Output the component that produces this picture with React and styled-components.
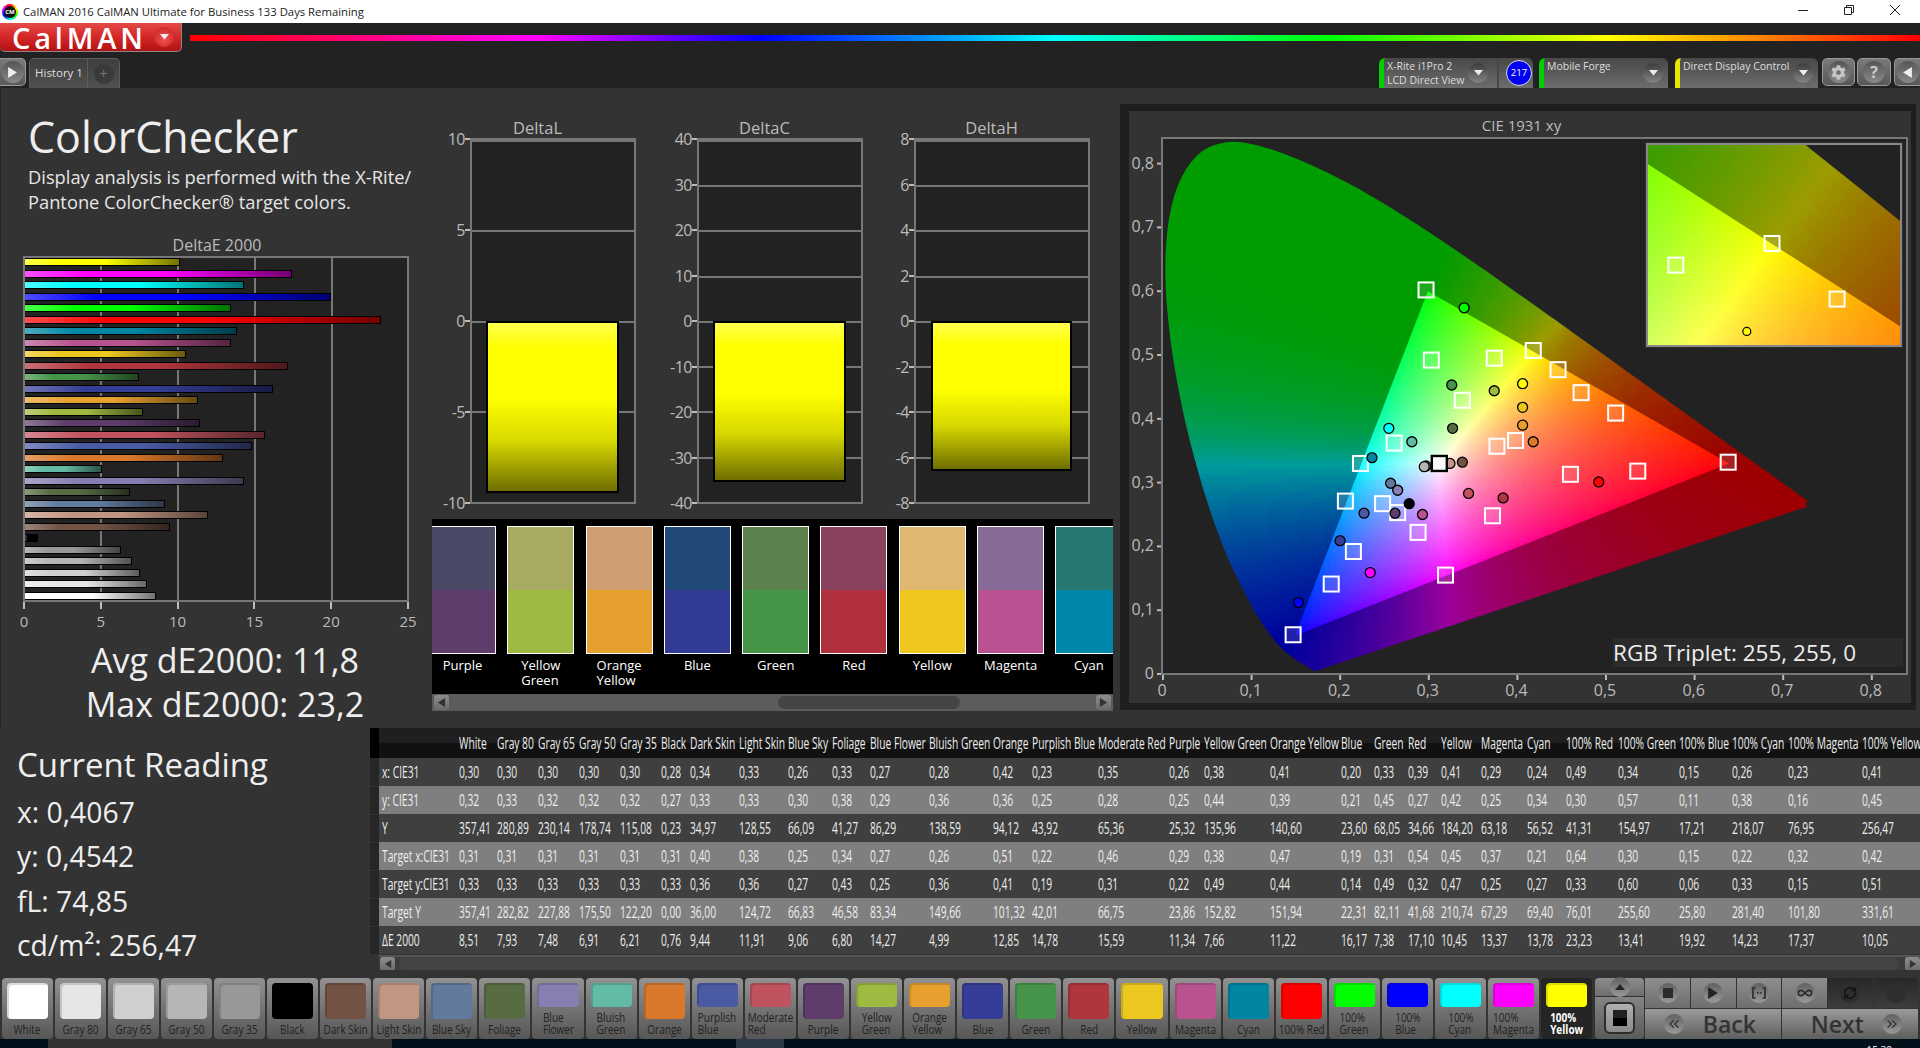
import React, { useMemo } from 'react';
import styled, { createGlobalStyle } from 'styled-components';
import { ChevronsLeft, ChevronsRight, Infinity as InfinityIcon, RefreshCw } from 'lucide-react';
import { FaCog } from 'react-icons/fa';

const Global = createGlobalStyle`
  html, body { margin: 0; padding: 0; background: #222; overflow: hidden; }
  body { font-family: "Open Sans", "Noto Sans", sans-serif; width: 1920px; height: 1048px; }
  * { box-sizing: border-box; }
`;

const PATCHES = [
  ['White', '#ffffff'], ['Gray 80', '#e6e6e6'], ['Gray 65', '#d0d0d0'], ['Gray 50', '#b6b6b6'], ['Gray 35', '#989898'],
  ['Black', '#000000'], ['Dark Skin', '#735244'], ['Light Skin', '#c29682'], ['Blue Sky', '#627a9d'], ['Foliage', '#576c43'],
  ['Blue Flower', '#8580b1'], ['Bluish Green', '#62bba5'], ['Orange', '#d9772a'], ['Purplish Blue', '#4a5aa5'], ['Moderate Red', '#c15360'],
  ['Purple', '#5e3c6c'], ['Yellow Green', '#9fba40'], ['Orange Yellow', '#e7a02e'], ['Blue', '#353d96'], ['Green', '#469449'],
  ['Red', '#af363c'], ['Yellow', '#ecc71f'], ['Magenta', '#b85390'], ['Cyan', '#0085a3'], ['100% Red', '#ff0000'],
  ['100% Green', '#00ff00'], ['100% Blue', '#0000ff'], ['100% Cyan', '#00ffff'], ['100% Magenta', '#ff00ff'], ['100% Yellow', '#ffff00'],
];

const ROWS = [
  ['x: CIE31', '0,30 0,30 0,30 0,30 0,30 0,28 0,34 0,33 0,26 0,33 0,27 0,28 0,42 0,23 0,35 0,26 0,38 0,41 0,20 0,33 0,39 0,41 0,29 0,24 0,49 0,34 0,15 0,26 0,23 0,41'],
  ['y: CIE31', '0,32 0,33 0,32 0,32 0,32 0,27 0,33 0,33 0,30 0,38 0,29 0,36 0,36 0,25 0,28 0,25 0,44 0,39 0,21 0,45 0,27 0,42 0,25 0,34 0,30 0,57 0,11 0,38 0,16 0,45'],
  ['Y', '357,41 280,89 230,14 178,74 115,08 0,23 34,97 128,55 66,09 41,27 86,29 138,59 94,12 43,92 65,36 25,32 135,96 140,60 23,60 68,05 34,66 184,20 63,18 56,52 41,31 154,97 17,21 218,07 76,95 256,47'],
  ['Target x:CIE31', '0,31 0,31 0,31 0,31 0,31 0,31 0,40 0,38 0,25 0,34 0,27 0,26 0,51 0,22 0,46 0,29 0,38 0,47 0,19 0,31 0,54 0,45 0,37 0,21 0,64 0,30 0,15 0,22 0,32 0,42'],
  ['Target y:CIE31', '0,33 0,33 0,33 0,33 0,33 0,33 0,36 0,36 0,27 0,43 0,25 0,36 0,41 0,19 0,31 0,22 0,49 0,44 0,14 0,49 0,32 0,47 0,25 0,27 0,33 0,60 0,06 0,33 0,15 0,51'],
  ['Target Y', '357,41 282,82 227,88 175,50 122,20 0,00 36,00 124,72 66,83 46,58 83,34 149,66 101,32 42,01 66,75 23,86 152,82 151,94 22,31 82,11 41,68 210,74 67,29 69,40 76,01 255,60 25,80 281,40 101,80 331,61'],
  ['ΔE 2000', '8,51 7,93 7,48 6,91 6,21 0,76 9,44 11,91 9,06 6,80 14,27 4,99 12,85 14,78 15,59 11,34 7,66 11,22 16,17 7,38 17,10 10,45 13,37 13,78 23,23 13,41 19,92 14,23 17,37 10,05'],
].map(([label, values]) => [label, values.split(' ')]);

const COL_STARTS = [458.5, 497, 538, 579, 620, 660.5, 690, 739, 787.5, 832, 869.5, 929, 993, 1032, 1098, 1169, 1204, 1270, 1341, 1374, 1408, 1441, 1481, 1527, 1566, 1618, 1679, 1732, 1788, 1862, 1920];

const DE_VALUES = ROWS[6][1].map((v) => parseFloat(v.replace(',', '.')));

const shade = (hex, k, toward) => {
  const n = parseInt(hex.slice(1), 16);
  const c = [n >> 16, (n >> 8) & 255, n & 255].map((v) => Math.round(v + (toward - v) * k));
  return `rgb(${c[0]},${c[1]},${c[2]})`;
};

/* ---------- window chrome ---------- */
const Page = styled.div`
  width: 1920px;
  height: 1048px;
  display: flex;
  flex-direction: column;
  overflow: hidden;
  background: #333;
`;
const TitleBar = styled.div`
  height: 23px;
  flex: none;
  background: #fff;
  display: flex;
  align-items: center;
  padding-left: 2px;
  color: #222;
`;
const AppBadge = styled.div`
  width: 16px;
  height: 16px;
  border-radius: 50%;
  background: conic-gradient(#f00, #ff0, #0f0, #0ff, #00f, #f0f, #f00);
  display: flex;
  align-items: center;
  justify-content: center;
  flex: none;
`;
const AppBadgeCore = styled.span`
  width: 12px;
  height: 12px;
  border-radius: 50%;
  background: #111;
  color: #fff;
  font-size: 6px;
  font-weight: 700;
  line-height: 12px;
  text-align: center;
`;
const WindowTitle = styled.span`
  margin-left: 5px;
  font-size: 11.3px;
  white-space: nowrap;
`;
const WindowButtons = styled.div`
  margin-left: auto;
  display: flex;
  padding-right: 2px;
  height: 100%;
`;
const WindowButton = styled.div`
  width: 46px;
  display: flex;
  align-items: center;
  justify-content: center;
  padding-bottom: 3px;
`;
const TopBar = styled.div`
  height: 65px;
  flex: none;
  background: #222;
`;
const LogoRow = styled.div`
  height: 35px;
  display: flex;
  align-items: flex-start;
`;
const Logo = styled.div`
  width: 182px;
  height: 29px;
  flex: none;
  background: linear-gradient(#e54a4a, #d62a2a 45%, #b31212);
  border-radius: 0 0 5px 5px;
  border-right: 1px solid #8a8a8a;
  border-bottom: 1px solid #8a8a8a;
  display: flex;
  align-items: center;
  padding-left: 12px;
  color: #fff;
  font-size: 29px;
  font-weight: 600;
  letter-spacing: 3.8px;
  line-height: 29px;
`;
const LogoArrow = styled.span`
  margin-left: auto;
  margin-right: 7px;
  width: 20px;
  height: 20px;
  border-radius: 50%;
  background: radial-gradient(circle at 50% 60%, #f05050, #c02020);
  display: flex;
  align-items: center;
  justify-content: center;
`;
const Rainbow = styled.div`
  flex: 1;
  height: 6px;
  margin: 12px 0 0 8px;
  background: linear-gradient(90deg, #f00 0%, #f0f 20%, #00f 33%, #0ff 50%, #0f0 66%, #ff0 82%, #f00 100%);
`;
const TabRow = styled.div`
  height: 30px;
  display: flex;
  align-items: flex-start;
  overflow: hidden;
`;
const PlayTab = styled.div`
  width: 26px;
  height: 28px;
  flex: none;
  border: 1px solid #999;
  border-left: 0;
  border-radius: 0 5px 5px 0;
  background: linear-gradient(#7a7a7a, #5a5a5a);
  display: flex;
  align-items: center;
  justify-content: center;
`;
const HistoryTab = styled.div`
  width: 59px;
  height: 30px;
  margin-left: 3px;
  flex: none;
  border-radius: 5px 0 0 0;
  background: linear-gradient(#3e3e3e, #505050);
  border: 1px solid #5c5c5c;
  border-bottom: 0;
  color: #ddd;
  font-size: 11.5px;
  line-height: 28px;
  padding-left: 5px;
  white-space: nowrap;
`;
const PlusTab = styled.div`
  width: 32px;
  height: 30px;
  flex: none;
  border-radius: 0 5px 0 0;
  background: linear-gradient(#3e3e3e, #505050);
  border: 1px solid #5c5c5c;
  border-left: 0;
  border-bottom: 0;
  display: flex;
  align-items: center;
  justify-content: center;
`;
const PlusCircle = styled.span`
  width: 20px;
  height: 20px;
  border-radius: 50%;
  background: #3a3a3a;
  color: #777;
  font-size: 14px;
  line-height: 20px;
  text-align: center;
`;
const Spacer = styled.div`
  flex: 1;
`;
const DeviceTab = styled.div`
  width: ${(p) => p.$w}px;
  margin-left: ${(p) => p.$ml}px;
  height: 30px;
  flex: none;
  border-radius: 6px 6px 0 0;
  background: linear-gradient(#484848, #6c6c6c);
  border-left: 5px solid ${(p) => p.$bar};
  display: flex;
  align-items: flex-start;
  overflow: hidden;
`;
const DeviceText = styled.div`
  padding: 1px 0 0 3px;
  color: #ddd;
  font-size: 10.5px;
  line-height: 14px;
  white-space: nowrap;
  width: ${(p) => p.$w}px;
  flex: none;
`;
const DropCircle = styled.span`
  width: 20px;
  height: 20px;
  margin-top: 5px;
  flex: none;
  border-radius: 50%;
  background: linear-gradient(#3c3c3c, #848484);
  display: flex;
  align-items: center;
  justify-content: center;
`;
const TabDivider = styled.span`
  width: 2px;
  height: 30px;
  margin-left: 9px;
  background: #484848;
  flex: none;
`;
const CountBadge = styled.span`
  width: 26px;
  height: 26px;
  margin: 2px 0 0 7px;
  flex: none;
  border-radius: 50%;
  background: #0000f0;
  border: 1px solid #ddd;
  color: #fff;
  font-size: 9.5px;
  line-height: 24px;
  text-align: center;
`;
const ToolButton = styled.div`
  width: ${(p) => p.$w}px;
  margin-left: ${(p) => p.$ml}px;
  height: 28px;
  flex: none;
  border: 1px solid #999;
  border-radius: ${(p) => (p.$open ? '5px 0 0 5px' : '5px')};
  ${(p) => (p.$open ? 'border-right: 0;' : '')}
  background: linear-gradient(#7a7a7a, #585858);
  display: flex;
  align-items: center;
  justify-content: center;
`;
const ToolCircle = styled.span`
  width: 22px;
  height: 22px;
  border-radius: 50%;
  background: linear-gradient(#555, #8a8a8a);
  color: #ccc;
  font-size: 16px;
  font-weight: 700;
  line-height: 22px;
  text-align: center;
  display: flex;
  align-items: center;
  justify-content: center;
`;

/* ---------- main area ---------- */
const Main = styled.div`
  height: 882px;
  flex: none;
  display: flex;
  flex-direction: column;
  background: #333;
`;
const UpperRow = styled.div`
  height: 640px;
  flex: none;
  display: flex;
`;
const LeftPane = styled.div`
  width: 432px;
  flex: none;
  border-left: 1px solid #262626;
  padding-left: 27px;
`;
const Heading = styled.h1`
  margin: 24px 0 0;
  font-size: 43px;
  font-weight: 400;
  line-height: 50px;
  height: 50px;
  color: #eee;
  white-space: nowrap;
`;
const Description = styled.p`
  margin: 2px 0 0;
  color: #e6e6e6;
  font-size: 18.3px;
  line-height: 25px;
  white-space: nowrap;
`;
const ChartTitle = styled.div`
  height: 20px;
  font-size: 16px;
  line-height: 20px;
  color: #bbb;
  text-align: center;
  white-space: nowrap;
`;
const DeTitle = styled(ChartTitle)`
  margin: 21px 0 0 -27px;
  width: 432px;
`;
const DePlot = styled.div`
  margin: 1px 0 0 -5.5px;
  width: 386px;
  height: 346px;
  border: 2px solid #777;
  background-color: #222;
  background-image: repeating-linear-gradient(90deg, transparent 0 75px, #777 75px 77px);
  display: flex;
  flex-direction: column;
  justify-content: space-between;
  align-items: flex-start;
`;
const DeBar = styled.div`
  height: 8px;
  border: 1.5px solid #000;
  border-left: 0;
  flex: none;
`;
const DeAxis = styled.div`
  margin-left: -4.5px;
  width: 385px;
  display: flex;
  justify-content: space-between;
`;
const DeTick = styled.div`
  width: 1px;
  display: flex;
  flex-direction: column;
  align-items: center;
  color: #bbb;
  font-size: 15px;
  line-height: 20px;
  &::before {
    content: '';
    width: 2px;
    height: 7px;
    background: #bbb;
    flex: none;
    margin-bottom: 2px;
  }
`;
const SummaryBlock = styled.div`
  margin: 7px 0 0 -11px;
  width: 416px;
  text-align: center;
  color: #eee;
  font-size: 34px;
  line-height: 44px;
  white-space: nowrap;
`;
const MiddlePane = styled.div`
  width: 681px;
  flex: none;
`;
const DeltaRow = styled.div`
  display: flex;
  padding-top: 30px;
`;
const DeltaChart = styled.div`
  margin-left: ${(p) => p.$ml}px;
  flex: none;
`;
const DeltaTitle = styled(ChartTitle)`
  font-size: 16.5px;
  padding-left: ${(p) => p.$shift}px;
`;
const DeltaBody = styled.div`
  display: flex;
`;
const DeltaLabels = styled.div`
  width: 38px;
  height: 366px;
  display: flex;
  flex-direction: column;
  justify-content: space-between;
  padding: 1px 0;
`;
const DeltaLabel = styled.div`
  height: 0;
  display: flex;
  align-items: center;
  justify-content: flex-end;
  color: #bbb;
  font-size: 16px;
  letter-spacing: -0.5px;
  &::after {
    content: '';
    width: 5px;
    height: 2px;
    margin-left: 0;
    background: #bbb;
  }
`;
const DeltaPlot = styled.div`
  position: relative;
  width: ${(p) => p.$w}px;
  height: 366px;
  border: 2px solid #777;
  background-color: #222;
  background-image: repeating-linear-gradient(180deg, #777 0 2px, transparent 2px calc(100% / ${(p) => p.$n}));
`;
const DeltaBar = styled.div`
  position: absolute;
  left: ${(p) => p.$left}px;
  top: 181px;
  width: ${(p) => p.$w}px;
  height: ${(p) => p.$h}px;
  border: 2px solid #000;
  background: linear-gradient(#ffff50 0%, #ffff00 15%, #ffff00 45%, #d8d800 70%, #6e6e00 100%);
`;
const SwatchStrip = styled.div`
  margin-top: 15px;
  height: 175px;
  background: #000;
  overflow: hidden;
  display: flex;
  padding-top: 7px;
`;
const SwatchRow = styled.div`
  display: flex;
  gap: 11.3px;
  margin-left: -3px;
  flex: none;
`;
const SwatchItem = styled.div`
  width: 67px;
  flex: none;
`;
const SwatchFrame = styled.div`
  height: 128px;
  border: 1px solid #fff;
  display: flex;
  flex-direction: column;
`;
const SwatchHalf = styled.div`
  flex: 1;
  background: ${(p) => p.$c};
`;
const SwatchCaption = styled.div`
  margin-top: 4px;
  display: flex;
  justify-content: center;
  color: #fff;
  font-size: 13px;
  line-height: 14.5px;
  white-space: nowrap;
`;
const ScrollTrack = styled.div`
  height: ${(p) => p.$h}px;
  background: ${(p) => p.$bg};
  display: flex;
  align-items: center;
  padding: 0 2px;
`;
const ScrollButton = styled.div`
  width: 15px;
  height: ${(p) => p.$h}px;
  background: linear-gradient(#8d8d8d, #6a6a6a);
  border-radius: 3px;
  flex: none;
  display: flex;
  align-items: center;
  justify-content: center;
`;
const StripThumb = styled.div`
  width: 182px;
  height: 13px;
  margin: 0 auto 0 329px;
  background: #444;
  border-radius: 7px;
`;

/* ---------- CIE ---------- */
const CiePanel = styled.div`
  margin: 16px 0 0 7px;
  width: 796px;
  height: 606px;
  flex: none;
  background: #333;
  border: solid #1e1e1e;
  border-width: 7px 5px 7px 9px;
  padding-top: 4px;
`;
const CieTitle = styled(ChartTitle)`
  height: 21px;
  font-size: 15px;
  padding-left: 3px;
`;
const CieCanvas = styled.div`
  position: relative;
  width: 782px;
  height: 565px;
`;
const InsetFrame = styled.div`
  position: absolute;
  left: 516px;
  top: 6px;
  width: 258px;
  height: 206px;
  border: 3px solid #2e2e2e;
`;
const InsetSvg = styled.svg`
  display: block;
  width: 252px;
  height: 200px;
  border: 2px solid #888;
  box-sizing: content-box;
  margin: -2px;
`;
const TripletBox = styled.div`
  position: absolute;
  left: 484px;
  top: 502px;
  width: 290px;
  height: 29px;
  background: #2b2b2b;
  color: #eee;
  font-size: 22.5px;
  line-height: 29px;
  white-space: nowrap;
`;

/* ---------- lower ---------- */
const LowerRow = styled.div`
  height: 242px;
  flex: none;
  display: flex;
`;
const ReadingPane = styled.div`
  width: 370px;
  flex: none;
  padding: 15px 0 0 17px;
  color: #eee;
  white-space: nowrap;
`;
const ReadingTitle = styled.div`
  font-size: 33px;
  line-height: 44px;
  margin-bottom: 3px;
`;
const ReadingLine = styled.div`
  font-size: 28.3px;
  line-height: 44.3px;
`;
const TablePane = styled.div`
  width: 1550px;
  flex: none;
`;
const DataTable = styled.table`
  border-collapse: collapse;
  table-layout: fixed;
  width: 1550px;
`;
const Col = styled.col`
  width: ${(p) => p.$w}px;
`;
const Tr = styled.tr`
  height: ${(p) => p.$h}px;
  background: ${(p) => p.$bg};
`;
const Th = styled.th`
  padding: 0;
  height: 30px;
  font-weight: 400;
  text-align: left;
  background: linear-gradient(#1f1f1f 50%, #111 50%);
  overflow: visible;
`;
const Td = styled.td`
  padding: 0;
  height: 28px;
  overflow: visible;
`;
const Gutter = styled.td`
  padding: 0;
  background: ${(p) => p.$bg};
  border-bottom: 1px solid #333;
`;
const HeaderGutter = styled.th`
  padding: 0;
  background: #000;
`;
const CellText = styled.span`
  display: inline-block;
  color: #eee;
  font-size: 16px;
  line-height: 20px;
  white-space: nowrap;
  transform: scaleX(0.64);
  transform-origin: left center;
`;
const RowLabel = styled(CellText)`
  margin-left: 3px;
`;
const TableScroll = styled(ScrollTrack)`
  margin-left: 9px;
  padding: 0 0 0 1px;
  border-top: 2px solid #555;
  border-bottom: 1px solid #555;
`;
const TableThumb = styled.div`
  flex: 1;
  height: 14px;
  margin: 0 6px 0 4px;
  background: #444;
  border-radius: 6px;
`;

/* ---------- palette ---------- */
const BottomRow = styled.div`
  height: 69px;
  flex: none;
  background: #333;
  padding: 8px 0 0 1.5px;
  display: flex;
`;
const PatchButton = styled.div`
  width: 51.1px;
  height: 61px;
  margin-right: 2px;
  flex: none;
  border-radius: 4px;
  background: ${(p) => (p.$on ? '#252525' : 'linear-gradient(#929292, #565656)')};
  padding: 5px 5px 0;
  color: ${(p) => (p.$on ? '#fff' : '#222')};
  font-weight: ${(p) => (p.$on ? 700 : 400)};
`;
const PatchChip = styled.div`
  height: ${(p) => p.$h}px;
  border-radius: 4px;
  background: ${(p) => p.$c};
  box-shadow: inset 2px 2px 0 rgba(0, 0, 0, 0.14);
`;
const PatchLabel = styled.div`
  margin-top: 5px;
  display: flex;
  justify-content: center;
  font-size: 12.5px;
  line-height: 12px;
  white-space: nowrap;
`;
const PatchText = styled.span`
  display: inline-block;
  text-align: left;
  transform: scaleX(0.8);
`;
const Controls = styled.div`
  width: 323px;
  margin-left: 1px;
  flex: none;
  height: 61px;
  display: flex;
`;
const ControlSide = styled.div`
  width: 49px;
  flex: none;
  display: flex;
  flex-direction: column;
`;
const SideUp = styled.div`
  height: 18px;
  border-radius: 4px 4px 0 0;
  background: linear-gradient(#8c8c8c, #6e6e6e);
  display: flex;
  align-items: center;
  justify-content: center;
`;
const SideStop = styled.div`
  flex: 1;
  margin-top: 1px;
  border-radius: 0 0 4px 4px;
  background: linear-gradient(#848484, #5a5a5a);
  display: flex;
  align-items: center;
  justify-content: center;
`;
const StopFrame = styled.div`
  width: 31px;
  height: 32px;
  border: 2px solid #2e2e2e;
  border-radius: 6px;
  background: linear-gradient(#b0b0b0, #8a8a8a);
  display: flex;
  align-items: center;
  justify-content: center;
`;
const StopCore = styled.div`
  width: 14px;
  height: 16px;
  background: linear-gradient(#222 50%, #000 50%);
`;
const ControlMain = styled.div`
  flex: 1;
  display: flex;
  flex-direction: column;
  gap: 1px;
  margin-left: 1px;
`;
const ControlTop = styled.div`
  height: 30px;
  display: grid;
  grid-template-columns: repeat(6, 1fr);
  gap: 1px;
`;
const ControlCell = styled.div`
  background: ${(p) => (p.$dark ? 'linear-gradient(#282828, #3c3c3c)' : 'linear-gradient(#8e8e8e, #6e6e6e)')};
  display: flex;
  align-items: center;
  justify-content: center;
`;
const Knob = styled.span`
  width: 20px;
  height: 20px;
  border-radius: 50%;
  background: ${(p) => (p.$dark ? '#2e2e2e' : 'linear-gradient(#606060, #9a9a9a)')};
  display: flex;
  align-items: center;
  justify-content: center;
  flex: none;
`;
const ControlBottom = styled.div`
  flex: 1;
  display: grid;
  grid-template-columns: 1fr 1fr;
  gap: 1px;
`;
const NavButton = styled.div`
  background: linear-gradient(#9a9a9a, #5e5e5e);
  display: flex;
  align-items: center;
  justify-content: ${(p) => p.$justify};
  gap: 18.5px;
  padding: 0 16px 0 19px;
  color: #333;
  font-size: 23px;
  font-weight: 600;
  line-height: 30px;
`;
const Taskbar = styled.div`
  height: 9px;
  flex: none;
  background: #00101a;
  display: flex;
  overflow: hidden;
`;
const TaskSegment = styled.div`
  width: ${(p) => p.$w}px;
  background: ${(p) => p.$c};
  flex: none;
`;
const Clock = styled.div`
  margin-left: auto;
  margin-right: 28px;
  padding-top: 5px;
  color: #fff;
  font-size: 10px;
  line-height: 12px;
`;

/* ---------- gamut computation ---------- */
const RAW_LOCUS = [[.1741,.005],[.1738,.0049],[.1733,.0048],[.1726,.0048],[.1714,.0051],[.1703,.0058],[.1689,.0069],[.1669,.0086],[.1644,.0109],[.1611,.0138],[.1566,.0177],[.151,.0227],[.144,.0297],[.1355,.0399],[.1241,.0578],[.1096,.0868],[.0913,.1327],[.0687,.2007],[.0454,.295],[.0235,.4127],[.0082,.5384],[.0039,.6548],[.0139,.7502],[.0389,.812],[.0743,.8338],[.1142,.8262],[.1547,.8059],[.1929,.7816],[.2296,.7543],[.2658,.7243],[.3016,.6923],[.3373,.6589],[.3731,.6245],[.4087,.5896],[.4441,.5547],[.4788,.5202],[.5125,.4866],[.5448,.4544],[.5752,.4242],[.6029,.3965],[.627,.3725],[.6482,.3514],[.6658,.334],[.6801,.3197],[.6915,.3083],[.7006,.2993],[.7079,.292],[.714,.2859],[.719,.2809],[.726,.274],[.7347,.2653]];
const smoothCurve = (pts, steps) => {
  const out = [];
  for (let i = 0; i < pts.length - 1; i++) {
    const p0 = pts[Math.max(i - 1, 0)];
    const p1 = pts[i];
    const p2 = pts[i + 1];
    const p3 = pts[Math.min(i + 2, pts.length - 1)];
    for (let s = 0; s < steps; s++) {
      const t = s / steps;
      const c = (a, b, cc, d) => 0.5 * (2 * b + (cc - a) * t + (2 * a - 5 * b + 4 * cc - d) * t * t + (3 * b - a - 3 * cc + d) * t * t * t);
      out.push([c(p0[0], p1[0], p2[0], p3[0]), c(p0[1], p1[1], p2[1], p3[1])]);
    }
  }
  out.push(pts[pts.length - 1]);
  return out;
};
const LOCUS = smoothCurve(RAW_LOCUS, 5);
const TRI = [[.64,.33],[.3,.6],[.15,.06]];

const linearRatios = (x, y) => {
  const yy = Math.max(y, 0.002);
  const X = x / yy;
  const Z = (1 - x - y) / yy;
  const r = Math.max(0, 3.2406 * X - 1.5372 - 0.4986 * Z);
  const g = Math.max(0, -0.9689 * X + 1.8758 + 0.0415 * Z);
  const b = Math.max(0, 0.0557 * X - 0.204 + 1.057 * Z);
  const m = Math.max(r, g, b, 1e-6);
  return [r / m, g / m, b / m];
};
const q = (v, s) => Math.min(255, Math.round(v / s) * s);
const innerColor = (x, y) => {
  const [r, g, b] = linearRatios(x, y);
  const t = (v) => q(255 * Math.pow(v, 1 / 1.35), 4);
  return `rgb(${t(r)},${t(g)},${t(b)})`;
};
const outerColor = (x, y) => {
  const [r, g, b] = linearRatios(x, y);
  const bb = g >= r && g >= b ? b * b : b;
  const k = 156;
  return `rgb(${q(r * k, 4)},${q(g * k, 4)},${q(bb * k, 4)})`;
};
const triSide = (x, y, a, b) => (b[0] - a[0]) * (y - a[1]) - (b[1] - a[1]) * (x - a[0]);
const inTriangle = (x, y, margin) => {
  const s1 = triSide(x, y, TRI[0], TRI[1]);
  const s2 = triSide(x, y, TRI[1], TRI[2]);
  const s3 = triSide(x, y, TRI[2], TRI[0]);
  return s1 >= margin && s2 >= margin && s3 >= margin;
};
const inLocus = (x, y) => {
  let c = false;
  for (let i = 0, j = RAW_LOCUS.length - 1; i < RAW_LOCUS.length; j = i++) {
    const a = RAW_LOCUS[i];
    const b = RAW_LOCUS[j];
    if (a[1] > y !== b[1] > y && x < ((b[0] - a[0]) * (y - a[1])) / (b[1] - a[1]) + a[0]) c = !c;
  }
  return c;
};
const gridPaths = (w, h, cell, toX, toY, colorFor, keep) => {
  const groups = new Map();
  for (let py = 0; py < h; py += cell) {
    for (let px = 0; px < w; px += cell) {
      const x = toX(px + cell / 2);
      const y = toY(py + cell / 2);
      if (!keep(px, py, x, y)) continue;
      const color = colorFor(x, y);
      const cmd = `M${px} ${py}h${cell}v${cell}h-${cell}z`;
      groups.set(color, (groups.get(color) || '') + cmd);
    }
  }
  return [...groups.entries()];
};
const polyPath = (pts, fx, fy) => pts.map((p, i) => `${i ? 'L' : 'M'}${fx(p[0]).toFixed(1)} ${fy(p[1]).toFixed(1)}`).join('') + 'Z';

const Gamut = ({ w, h, fx, fy, ix, iy, outerCell, innerCell, id }) => {
  const { outer, inner, locus, tri } = useMemo(() => {
    const pad = outerCell * 2;
    const keepOuter = (px, py) => {
      const corners = [[px - pad, py - pad], [px + pad, py - pad], [px - pad, py + pad], [px + pad, py + pad]];
      const own = [[px, py], [px + outerCell, py], [px, py + outerCell], [px + outerCell, py + outerCell]];
      return corners.some(([a, b]) => inLocus(ix(a), iy(b))) && !own.every(([a, b]) => inTriangle(ix(a), iy(b), 0.002));
    };
    const keepInner = (px, py, x, y) => inTriangle(x, y, -0.012);
    return {
      outer: gridPaths(w, h, outerCell, ix, iy, outerColor, keepOuter),
      inner: gridPaths(w, h, innerCell, ix, iy, innerColor, keepInner),
      locus: polyPath(LOCUS, fx, fy),
      tri: polyPath(TRI, fx, fy),
    };
  }, []);
  return (
    <>
      <defs>
        <clipPath id={`${id}-locus`}><path d={locus} /></clipPath>
        <clipPath id={`${id}-tri`}><path d={tri} /></clipPath>
      </defs>
      <g clipPath={`url(#${id}-locus)`} shapeRendering="crispEdges">
        {outer.map(([c, d]) => <path key={c} d={d} fill={c} />)}
      </g>
      <g clipPath={`url(#${id}-tri)`} shapeRendering="crispEdges">
        {inner.map(([c, d]) => <path key={c} d={d} fill={c} />)}
      </g>
    </>
  );
};

const TARGETS = [[.298,.602],[.419,.507],[.447,.477],[.473,.441],[.512,.409],[.304,.492],[.375,.495],[.339,.429],[.262,.362],[.378,.357],[.399,.366],[.224,.33],[.461,.313],[.537,.318],[.639,.332],[.207,.271],[.249,.267],[.266,.253],[.373,.248],[.289,.222],[.216,.192],[.32,.155],[.191,.141],[.148,.0615]];
const READINGS = [
  [.341,.574,'#00ff00'],[.407,.455,'#ffff00'],[.327,.453,'#469449'],[.375,.444,'#9fba40'],[.407,.418,'#ecc71f'],[.407,.39,'#e7a02e'],[.328,.385,'#576c43'],[.256,.385,'#00ffff'],[.282,.364,'#62bba5'],[.419,.364,'#d9772a'],[.237,.339,'#0085a3'],[.339,.332,'#735244'],[.325,.33,'#c29682'],[.298,.326,'#888888'],[.296,.325,'#b6b6b6'],[.258,.299,'#627a9d'],[.266,.288,'#8580b1'],[.493,.301,'#ff0000'],[.346,.283,'#c15360'],[.385,.276,'#af363c'],[.279,.267,'#000000'],[.228,.252,'#4a5aa5'],[.263,.252,'#5e3c6c'],[.294,.25,'#b85390'],[.201,.209,'#353d96'],[.235,.159,'#ff00ff'],[.154,.112,'#0000ff'],
];

const Target = ({ x, y }) => (
  <rect x={x - 7.5} y={y - 7.5} width="15" height="15" fill="#fff" fillOpacity="0.13" stroke="#fff" strokeWidth="2" />
);

const plotX = (x) => x * 886;
const plotY = (y) => 536 - y * 638;
const insetX = (x) => 124 + (x - 0.419) * 2100;
const insetY = (y) => 99.7 + (0.505 - y) * 1700;
const TICKS = [0, 1, 2, 3, 4, 5, 6, 7, 8];
const tickText = (i) => (i === 0 ? '0' : `0,${i}`);

const CieChart = () => (
  <CieCanvas>
    <svg width="782" height="565" style={{ display: 'block' }}>
      <g fontFamily='"Open Sans", sans-serif' fontSize="16" fill="#bbb">
        {TICKS.map((i) => (
          <g key={i}>
            <rect x="28" y={plotY(i / 10) + 1} width="5" height="2" fill="#bbb" />
            <text x="25" y={plotY(i / 10) + 7} textAnchor="end">{tickText(i)}</text>
            <rect x={33 + plotX(i / 10)} y="538" width="2" height="6" fill="#bbb" />
            <text x={33 + plotX(i / 10)} y="560" textAnchor="middle">{tickText(i)}</text>
          </g>
        ))}
      </g>
      <g transform="translate(33 2)">
        <rect x="0" y="0" width="745" height="536" fill="#222" stroke="#777" strokeWidth="2" />
        <Gamut id="main" w={744} h={535} outerCell={4} innerCell={3} fx={plotX} fy={plotY} ix={(p) => p / 886} iy={(p) => (536 - p) / 638} />
        {TARGETS.map(([x, y], i) => <Target key={i} x={plotX(x)} y={plotY(y)} />)}
        {READINGS.map(([x, y, c], i) => (
          <circle key={i} cx={plotX(x)} cy={plotY(y)} r="5" fill={c} stroke="#000" strokeWidth="1.3" />
        ))}
        <rect x={plotX(.313) - 7.5} y={plotY(.33) - 7.5} width="15" height="15" fill="#f8f8f8" stroke="#000" strokeWidth="2.4" />
      </g>
    </svg>
    <InsetFrame>
      <InsetSvg viewBox="0 0 252 200">
        <rect width="252" height="200" fill="#222" />
        <Gamut id="inset" w={252} h={200} outerCell={4} innerCell={3} fx={insetX} fy={insetY} ix={(p) => 0.419 + (p - 124) / 2100} iy={(p) => 0.505 - (p - 99.7) / 1700} />
        {[[.3732,.493],[.419,.5057],[.45,.473]].map(([x, y], i) => <Target key={i} x={insetX(x)} y={insetY(y)} />)}
        <circle cx={insetX(.407)} cy={insetY(.454)} r="4" fill="#ffff00" stroke="#000" strokeWidth="1.2" />
      </InsetSvg>
    </InsetFrame>
    <TripletBox>RGB Triplet: 255, 255, 0</TripletBox>
  </CieCanvas>
);

/* ---------- small drawings ---------- */
const Tri = ({ dir = 'down', size = 10, color = '#eee' }) => {
  const pts = { down: '0,0 10,0 5,6', up: '5,0 10,6 0,6', right: '1,0 9,5 1,10', left: '9,0 1,5 9,10' }[dir];
  const vb = dir === 'down' || dir === 'up' ? '0 0 10 6' : '0 0 10 10';
  return <svg width={size} height={dir === 'down' || dir === 'up' ? size * 0.6 : size} viewBox={vb}><polygon points={pts} fill={color} /></svg>;
};

const Delta = ({ title, labels, plot, ml, bar, barLeft, barH, shift }) => (
  <DeltaChart $ml={ml}>
    <DeltaTitle $shift={shift}>{title}</DeltaTitle>
    <DeltaBody>
      <DeltaLabels>{labels.map((l) => <DeltaLabel key={l}>{l}</DeltaLabel>)}</DeltaLabels>
      <DeltaPlot $w={plot} $n={labels.length - 1}>
        <DeltaBar $left={barLeft} $w={bar} $h={barH} />
      </DeltaPlot>
    </DeltaBody>
  </DeltaChart>
);

const STRIP = [
  ['Purple', '#4a4a66', '#5e3c6c'], ['Yellow\nGreen', '#a8aa62', '#9fba40'], ['Orange\nYellow', '#cf9f73', '#e6a02e'],
  ['Blue', '#214a79', '#323b94'], ['Green', '#5d824d', '#479546'], ['Red', '#88425e', '#b0313d'],
  ['Yellow', '#dfb870', '#eec71e'], ['Magenta', '#876b98', '#b85290'], ['Cyan', '#277870', '#0086a8'],
];

const TWO_LINE = ['Blue Flower', 'Bluish Green', 'Purplish Blue', 'Moderate Red', 'Yellow Green', 'Orange Yellow', '100% Green', '100% Blue', '100% Cyan', '100% Magenta', '100% Yellow'];

const Lines = ({ text }) => {
  const parts = text.split('\n');
  return <>{parts.map((p, i) => <React.Fragment key={i}>{i > 0 && <br />}{p}</React.Fragment>)}</>;
};

export default function App() {
  const bars = PATCHES.map((p, i) => ({ color: p[1], value: DE_VALUES[i] })).reverse();
  return (
    <Page>
      <Global />
      <TitleBar>
        <AppBadge><AppBadgeCore>CM</AppBadgeCore></AppBadge>
        <WindowTitle>CalMAN 2016 CalMAN Ultimate for Business 133 Days Remaining</WindowTitle>
        <WindowButtons>
          <WindowButton><svg width="10" height="10"><path d="M0 5.5H10" stroke="#222" /></svg></WindowButton>
          <WindowButton><svg width="10" height="10"><path d="M.5 2.5h7v7h-7zM2.5 2.5v-2h7v7h-2" fill="none" stroke="#222" /></svg></WindowButton>
          <WindowButton><svg width="10" height="10"><path d="M0 0L10 10M10 0L0 10" stroke="#222" /></svg></WindowButton>
        </WindowButtons>
      </TitleBar>
      <TopBar>
        <LogoRow>
          <Logo>
            CalMAN
            <LogoArrow><Tri size={9} /></LogoArrow>
          </Logo>
          <Rainbow />
        </LogoRow>
        <TabRow>
          <PlayTab><ToolCircle><Tri dir="right" size={11} color="#eee" /></ToolCircle></PlayTab>
          <HistoryTab>History 1</HistoryTab>
          <PlusTab><PlusCircle>+</PlusCircle></PlusTab>
          <Spacer />
          <DeviceTab $w={154} $ml={0} $bar="#00d000">
            <DeviceText $w={84}>X-Rite i1Pro 2<br />LCD Direct View</DeviceText>
            <DropCircle><Tri size={9} /></DropCircle>
            <TabDivider />
            <CountBadge>217</CountBadge>
          </DeviceTab>
          <DeviceTab $w={129} $ml={6} $bar="#00d000">
            <DeviceText $w={99}>Mobile Forge</DeviceText>
            <DropCircle><Tri size={9} /></DropCircle>
          </DeviceTab>
          <DeviceTab $w={143} $ml={7} $bar="#e6e600">
            <DeviceText $w={113}>Direct Display Control</DeviceText>
            <DropCircle><Tri size={9} /></DropCircle>
          </DeviceTab>
          <ToolButton $w={33} $ml={4}><ToolCircle><FaCog size={15} color="#c4c4c4" /></ToolCircle></ToolButton>
          <ToolButton $w={34} $ml={2}><ToolCircle>?</ToolCircle></ToolButton>
          <ToolButton $w={26} $ml={3} $open><ToolCircle><Tri dir="left" size={11} color="#eee" /></ToolCircle></ToolButton>
        </TabRow>
      </TopBar>
      <Main>
        <UpperRow>
          <LeftPane>
            <Heading>ColorChecker</Heading>
            <Description>Display analysis is performed with the X-Rite/<br />Pantone ColorChecker® target colors.</Description>
            <DeTitle>DeltaE 2000</DeTitle>
            <DePlot>
              {bars.map((b, i) => (
                <DeBar
                  key={i}
                  style={{
                    width: Math.max(b.value * 15.3 + 1.5, 12),
                    background: `linear-gradient(90deg, ${shade(b.color, 0.3, 255)} 0%, ${b.color} 24%, ${b.color} 52%, ${shade(b.color, 0.55, 0)} 100%)`,
                  }}
                />
              ))}
            </DePlot>
            <DeAxis>
              {[0, 5, 10, 15, 20, 25].map((t) => <DeTick key={t}>{t}</DeTick>)}
            </DeAxis>
            <SummaryBlock>
              Avg dE2000: 11,8<br />Max dE2000: 23,2
            </SummaryBlock>
          </LeftPane>
          <MiddlePane>
            <DeltaRow>
              <Delta title="DeltaL" labels={['10', '5', '0', '-5', '-10']} plot={166} ml={0} bar={133} barLeft={14} barH={172} shift={7} />
              <Delta title="DeltaC" labels={['40', '30', '20', '10', '0', '-10', '-20', '-30', '-40']} plot={166} ml={23} bar={133} barLeft={14} barH={161} shift={7} />
              <Delta title="DeltaH" labels={['8', '6', '4', '2', '0', '-2', '-4', '-6', '-8']} plot={176} ml={13} bar={141} barLeft={15} barH={150} shift={17} />
            </DeltaRow>
            <SwatchStrip>
              <SwatchRow>
                {STRIP.map(([name, top, bottom]) => (
                  <SwatchItem key={name}>
                    <SwatchFrame><SwatchHalf $c={top} /><SwatchHalf $c={bottom} /></SwatchFrame>
                    <SwatchCaption><div><Lines text={name} /></div></SwatchCaption>
                  </SwatchItem>
                ))}
              </SwatchRow>
            </SwatchStrip>
            <ScrollTrack $h={17} $bg="#5c5c5c">
              <ScrollButton $h={15}><Tri dir="left" size={9} color="#333" /></ScrollButton>
              <StripThumb />
              <ScrollButton $h={15}><Tri dir="right" size={9} color="#333" /></ScrollButton>
            </ScrollTrack>
          </MiddlePane>
          <CiePanel>
            <CieTitle>CIE 1931 xy</CieTitle>
            <CieChart />
          </CiePanel>
        </UpperRow>
        <LowerRow>
          <ReadingPane>
            <ReadingTitle>Current Reading</ReadingTitle>
            <ReadingLine>x: 0,4067</ReadingLine>
            <ReadingLine>y: 0,4542</ReadingLine>
            <ReadingLine>fL: 74,85</ReadingLine>
            <ReadingLine>cd/m²: 256,47</ReadingLine>
          </ReadingPane>
          <TablePane>
            <DataTable>
              <colgroup>
                <Col $w={9} />
                <Col $w={79.5} />
                {PATCHES.map((_, i) => <Col key={i} $w={COL_STARTS[i + 1] - COL_STARTS[i]} />)}
              </colgroup>
              <thead>
                <Tr $h={30}>
                  <HeaderGutter />
                  <Th />
                  {PATCHES.map((p) => <Th key={p[0]}><CellText>{p[0]}</CellText></Th>)}
                </Tr>
              </thead>
              <tbody>
                {ROWS.map(([label, values], r) => (
                  <Tr key={label} $h={28} $bg={r % 2 ? '#7f7f7f' : '#3f3f3f'}>
                    <Gutter $bg="#262626" />
                    <Td><RowLabel>{label}</RowLabel></Td>
                    {values.map((v, i) => <Td key={i}><CellText>{v}</CellText></Td>)}
                  </Tr>
                ))}
              </tbody>
            </DataTable>
            <TableScroll $h={18} $bg="#3c3c3c">
              <ScrollButton $h={14}><Tri dir="left" size={8} color="#333" /></ScrollButton>
              <TableThumb />
              <ScrollButton $h={14}><Tri dir="right" size={8} color="#333" /></ScrollButton>
            </TableScroll>
          </TablePane>
        </LowerRow>
      </Main>
      <BottomRow>
        {PATCHES.map(([name, color]) => {
          const two = TWO_LINE.includes(name);
          const sp = name.indexOf(' ');
          return (
            <PatchButton key={name} $on={name === '100% Yellow'}>
              <PatchChip $c={color} $h={two ? 24 : 36} />
              <PatchLabel>
                <PatchText>
                  {two ? <>{name.slice(0, sp)}<br />{name.slice(sp + 1)}</> : name}
                </PatchText>
              </PatchLabel>
            </PatchButton>
          );
        })}
        <Controls>
          <ControlSide>
            <SideUp><Knob><Tri dir="up" size={10} color="#222" /></Knob></SideUp>
            <SideStop><StopFrame><StopCore /></StopFrame></SideStop>
          </ControlSide>
          <ControlMain>
            <ControlTop>
              <ControlCell><Knob><svg width="10" height="10"><rect width="10" height="10" fill="#2a2a2a" /></svg></Knob></ControlCell>
              <ControlCell><Knob><Tri dir="right" size={12} color="#222" /></Knob></ControlCell>
              <ControlCell><Knob><svg width="14" height="12" viewBox="0 0 14 12"><path d="M3.5 1H1v10h2.5M10.5 1H13v10h-2.5" fill="none" stroke="#2a2a2a" strokeWidth="1.6" /><rect x="5" y="5" width="1.6" height="1.6" fill="#2a2a2a" /><rect x="7.8" y="5" width="1.6" height="1.6" fill="#2a2a2a" /></svg></Knob></ControlCell>
              <ControlCell><Knob><InfinityIcon size={16} color="#2a2a2a" strokeWidth={2.4} /></Knob></ControlCell>
              <ControlCell $dark><Knob $dark><RefreshCw size={14} color="#151515" strokeWidth={3} /></Knob></ControlCell>
              <ControlCell $dark><Knob $dark /></ControlCell>
            </ControlTop>
            <ControlBottom>
              <NavButton $justify="flex-start"><Knob><ChevronsLeft size={16} color="#333" /></Knob>Back</NavButton>
              <NavButton $justify="flex-end">Next<Knob><ChevronsRight size={16} color="#333" /></Knob></NavButton>
            </ControlBottom>
          </ControlMain>
        </Controls>
      </BottomRow>
      <Taskbar>
        <TaskSegment $w={48} $c="#00101a" />
        <TaskSegment $w={344} $c="#333333" />
        <TaskSegment $w={344} $c="#00101a" />
        <TaskSegment $w={48} $c="#2c3a47" />
        <Clock>15:30</Clock>
      </Taskbar>
    </Page>
  );
}
